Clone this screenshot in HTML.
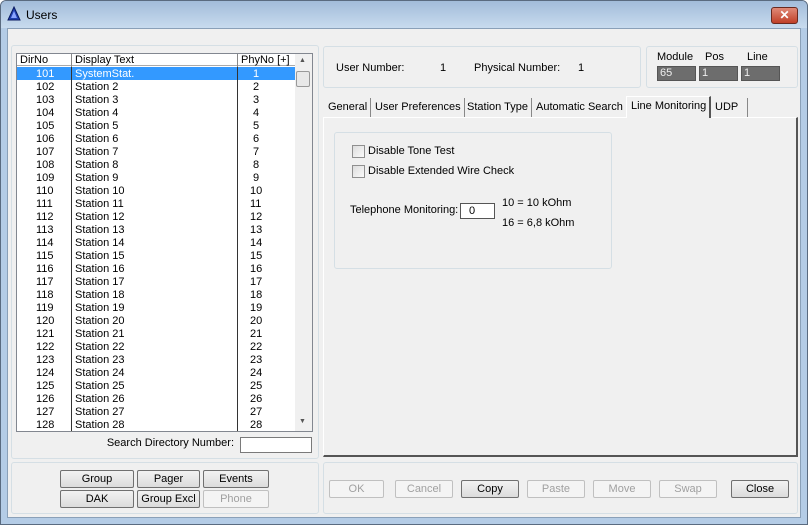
<!DOCTYPE html>
<html><head><style>
*{margin:0;padding:0;box-sizing:border-box}
body{width:808px;height:525px;overflow:hidden;background:#fff;font-family:"Liberation Sans",sans-serif;font-size:11px;color:#000;position:relative}
.a{position:absolute}
.win{left:0;top:0;width:808px;height:525px;background:#b4cce6;border:1px solid #5a6b80;border-radius:6px 6px 0 0}
.title{left:1px;top:1px;width:806px;height:27px;background:linear-gradient(#a2bcda,#c8dbee);border-radius:5px 5px 0 0}
.client{left:7px;top:28px;width:794px;height:490px;background:#f0f0f0;border:1px solid #8aa0b8}
.grp{border:1px solid #d5dfe5;border-radius:3px;background:#f0f0f0}
.btn{position:absolute;height:18px;border:1px solid #707070;border-radius:2px;background:linear-gradient(#f2f2f2,#dcdcdc);text-align:center;line-height:16px}
.dis{border-color:#c0c0c0;color:#a0a0a0;background:#f4f4f4}
.row{position:absolute;left:0;width:278px;height:13px;line-height:14px}
.row span{position:absolute}
.tab{position:absolute;top:98px;height:19px;line-height:19px;padding:0 3px;border-right:1px solid #888}
.cb{position:absolute;width:13px;height:13px;border:1px solid #8f8f8f;background:linear-gradient(135deg,#ddd,#fafafa)}
.box{position:absolute;background:#6d6d6d;border:1px solid #555;height:15px;line-height:13px;padding-left:2px;color:#eee}
</style></head><body>
<div class="a win"></div>
<div class="a title"></div>
<svg class="a" style="left:7px;top:6px" width="14" height="15"><polygon points="7,1 13,14 1,14" fill="#2040b0" stroke="#0a1a60"/><polygon points="7,5 10,12 4,12" fill="#8aa4ff"/></svg>
<div class="a" style="left:26px;top:8px;font-size:12px">Users</div>
<div class="a" style="left:771px;top:7px;width:27px;height:17px;background:linear-gradient(#e08a78,#c04028);border:1px solid #6a2a20;border-radius:3px;color:#fff;text-align:center;font-weight:bold;line-height:15px;font-size:12px">✕</div>
<div class="a client"></div>

<div class="a grp" style="left:11px;top:45px;width:308px;height:414px"></div>
<div class="a" style="left:16px;top:53px;width:297px;height:379px;background:#fff;border:1px solid #828790"></div>
<div class="a" style="left:17px;top:54px;width:278px;height:12px;background:#fff;border-bottom:1px solid #aaa;line-height:13px">
<span class="a" style="left:3px">DirNo</span><span class="a" style="left:58px">Display Text</span><span class="a" style="left:224px">PhyNo [+]</span>
<div class="a" style="left:54px;top:0;width:1px;height:378px;background:#888"></div>
<div class="a" style="left:220px;top:0;width:1px;height:378px;background:#888"></div>
</div>
<div class="a" style="left:295px;top:54px;width:17px;height:377px;background:#f0f0f0"></div>
<div class="a" style="left:296px;top:71px;width:14px;height:16px;background:#e8e8e8;border:1px solid #999;border-radius:2px"></div>
<div class="a" style="left:299px;top:57px;font-size:7px;color:#555">▲</div>
<div class="a" style="left:299px;top:418px;font-size:7px;color:#555">▼</div>
<div class="a" style="left:17px;top:67px;width:278px;height:364px;overflow:hidden">
<div class="row" style="top:0;background:#3399ff;color:#fff"><span style="left:19px">101</span><span style="left:58px">SystemStat.</span><span style="left:236px">1</span></div>
<div class="row" style="top:13px"><span style="left:19px">102</span><span style="left:58px">Station 2</span><span style="left:236px">2</span></div>
<div class="row" style="top:26px"><span style="left:19px">103</span><span style="left:58px">Station 3</span><span style="left:236px">3</span></div>
<div class="row" style="top:39px"><span style="left:19px">104</span><span style="left:58px">Station 4</span><span style="left:236px">4</span></div>
<div class="row" style="top:52px"><span style="left:19px">105</span><span style="left:58px">Station 5</span><span style="left:236px">5</span></div>
<div class="row" style="top:65px"><span style="left:19px">106</span><span style="left:58px">Station 6</span><span style="left:236px">6</span></div>
<div class="row" style="top:78px"><span style="left:19px">107</span><span style="left:58px">Station 7</span><span style="left:236px">7</span></div>
<div class="row" style="top:91px"><span style="left:19px">108</span><span style="left:58px">Station 8</span><span style="left:236px">8</span></div>
<div class="row" style="top:104px"><span style="left:19px">109</span><span style="left:58px">Station 9</span><span style="left:236px">9</span></div>
<div class="row" style="top:117px"><span style="left:19px">110</span><span style="left:58px">Station 10</span><span style="left:233px">10</span></div>
<div class="row" style="top:130px"><span style="left:19px">111</span><span style="left:58px">Station 11</span><span style="left:233px">11</span></div>
<div class="row" style="top:143px"><span style="left:19px">112</span><span style="left:58px">Station 12</span><span style="left:233px">12</span></div>
<div class="row" style="top:156px"><span style="left:19px">113</span><span style="left:58px">Station 13</span><span style="left:233px">13</span></div>
<div class="row" style="top:169px"><span style="left:19px">114</span><span style="left:58px">Station 14</span><span style="left:233px">14</span></div>
<div class="row" style="top:182px"><span style="left:19px">115</span><span style="left:58px">Station 15</span><span style="left:233px">15</span></div>
<div class="row" style="top:195px"><span style="left:19px">116</span><span style="left:58px">Station 16</span><span style="left:233px">16</span></div>
<div class="row" style="top:208px"><span style="left:19px">117</span><span style="left:58px">Station 17</span><span style="left:233px">17</span></div>
<div class="row" style="top:221px"><span style="left:19px">118</span><span style="left:58px">Station 18</span><span style="left:233px">18</span></div>
<div class="row" style="top:234px"><span style="left:19px">119</span><span style="left:58px">Station 19</span><span style="left:233px">19</span></div>
<div class="row" style="top:247px"><span style="left:19px">120</span><span style="left:58px">Station 20</span><span style="left:233px">20</span></div>
<div class="row" style="top:260px"><span style="left:19px">121</span><span style="left:58px">Station 21</span><span style="left:233px">21</span></div>
<div class="row" style="top:273px"><span style="left:19px">122</span><span style="left:58px">Station 22</span><span style="left:233px">22</span></div>
<div class="row" style="top:286px"><span style="left:19px">123</span><span style="left:58px">Station 23</span><span style="left:233px">23</span></div>
<div class="row" style="top:299px"><span style="left:19px">124</span><span style="left:58px">Station 24</span><span style="left:233px">24</span></div>
<div class="row" style="top:312px"><span style="left:19px">125</span><span style="left:58px">Station 25</span><span style="left:233px">25</span></div>
<div class="row" style="top:325px"><span style="left:19px">126</span><span style="left:58px">Station 26</span><span style="left:233px">26</span></div>
<div class="row" style="top:338px"><span style="left:19px">127</span><span style="left:58px">Station 27</span><span style="left:233px">27</span></div>
<div class="row" style="top:351px"><span style="left:19px">128</span><span style="left:58px">Station 28</span><span style="left:233px">28</span></div>
</div>
<div class="a" style="left:71px;top:67px;width:1px;height:364px;background:#333"></div>
<div class="a" style="left:237px;top:67px;width:1px;height:364px;background:#333"></div>
<div class="a" style="left:100px;top:437px;width:134px;text-align:right">Search Directory Number:</div>
<div class="a" style="left:240px;top:437px;width:72px;height:16px;background:#fff;border:1px solid #7a7a7a"></div>

<div class="a grp" style="left:11px;top:462px;width:308px;height:52px"></div>
<div class="btn" style="left:60px;top:470px;width:74px">Group</div>
<div class="btn" style="left:137px;top:470px;width:63px">Pager</div>
<div class="btn" style="left:203px;top:470px;width:66px">Events</div>
<div class="btn" style="left:60px;top:490px;width:74px">DAK</div>
<div class="btn" style="left:137px;top:490px;width:63px">Group Excl</div>
<div class="btn dis" style="left:203px;top:490px;width:66px">Phone</div>

<div class="a grp" style="left:323px;top:46px;width:318px;height:42px"></div>
<div class="a" style="left:336px;top:62px">User Number:</div>
<div class="a" style="left:440px;top:62px">1</div>
<div class="a" style="left:474px;top:62px">Physical Number:</div>
<div class="a" style="left:578px;top:62px">1</div>
<div class="a grp" style="left:646px;top:46px;width:152px;height:42px"></div>
<div class="a" style="left:657px;top:51px">Module</div>
<div class="a" style="left:705px;top:51px">Pos</div>
<div class="a" style="left:747px;top:51px">Line</div>
<div class="box" style="left:657px;top:66px;width:39px">65</div>
<div class="box" style="left:699px;top:66px;width:39px">1</div>
<div class="box" style="left:741px;top:66px;width:39px">1</div>

<div class="a" style="left:323px;top:117px;width:475px;height:340px;background:#f0f0f0;border:1px solid #fff;border-right:2px solid #555;border-bottom:2px solid #555"></div>
<div class="tab" style="left:325px">General</div>
<div class="tab" style="left:372px">User Preferences</div>
<div class="tab" style="left:464px">Station Type</div>
<div class="tab" style="left:533px">Automatic Search</div>
<div class="tab" style="left:626px;top:96px;height:22px;background:#f0f0f0;border-left:1px solid #fff;border-top:1px solid #fff;border-right:2px solid #555;line-height:19px;padding:0 3px 0 4px">Line Monitoring</div>
<div class="tab" style="left:712px">UDP&nbsp;&nbsp;</div>

<div class="a grp" style="left:334px;top:132px;width:278px;height:137px"></div>
<div class="cb" style="left:352px;top:145px"></div>
<div class="a" style="left:368px;top:145px">Disable Tone Test</div>
<div class="cb" style="left:352px;top:165px"></div>
<div class="a" style="left:368px;top:165px">Disable Extended Wire Check</div>
<div class="a" style="left:350px;top:204px">Telephone Monitoring:</div>
<div class="a" style="left:460px;top:203px;width:35px;height:16px;background:#fff;border:1px solid #555;padding-left:8px;line-height:14px">0</div>
<div class="a" style="left:502px;top:197px">10 = 10 kOhm</div>
<div class="a" style="left:502px;top:217px">16 = 6,8 kOhm</div>

<div class="a grp" style="left:323px;top:462px;width:475px;height:52px"></div>
<div class="btn dis" style="left:329px;top:480px;width:55px">OK</div>
<div class="btn dis" style="left:395px;top:480px;width:58px">Cancel</div>
<div class="btn" style="left:461px;top:480px;width:58px">Copy</div>
<div class="btn dis" style="left:527px;top:480px;width:58px">Paste</div>
<div class="btn dis" style="left:593px;top:480px;width:58px">Move</div>
<div class="btn dis" style="left:659px;top:480px;width:58px">Swap</div>
<div class="btn" style="left:731px;top:480px;width:58px">Close</div>
</body></html>
